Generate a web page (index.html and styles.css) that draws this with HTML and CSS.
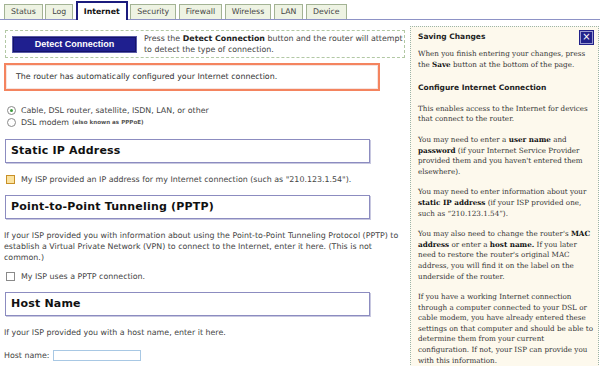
FILE: index.html
```html
<!DOCTYPE html>
<html lang="en">
<head>
    <meta charset="UTF-8">
    <title>Internet Settings</title>
    <link rel="stylesheet" href="styles.css">
</head>
<body>
    <div class="tabs">
        <div class="tab">Status</div>
        <div class="tab">Log</div>
        <div class="tab active">Internet</div>
        <div class="tab">Security</div>
        <div class="tab">Firewall</div>
        <div class="tab">Wireless</div>
        <div class="tab">LAN</div>
        <div class="tab">Device</div>
    </div>

    <div class="layout">
        <div class="main">
            <div class="detect">
                <button class="detect-btn">Detect Connection</button>
                <div class="detect-text">Press the <b>Detect Connection</b> button and the router will attempt<br>to detect the type of connection.</div>
            </div>

            <div class="alert">The router has automatically configured your Internet connection.</div>

            <div class="options">
                <div class="option"><span class="radio checked"></span>Cable, DSL router, satellite, ISDN, LAN, or other</div>
                <div class="option"><span class="radio"></span>DSL modem <span class="small">(also known as PPPoE)</span></div>
            </div>

            <h2 class="section">Static IP Address</h2>
            <div class="check-row"><span class="check hover"></span>My ISP provided an IP address for my Internet connection (such as "210.123.1.54").</div>

            <h2 class="section">Point-to-Point Tunneling (PPTP)</h2>
            <p class="para">If your ISP provided you with information about using the Point-to-Point Tunneling Protocol (PPTP) to establish a Virtual Private Network (VPN) to connect to the Internet, enter it here. (This is not common.)</p>
            <div class="check-row after-para"><span class="check"></span>My ISP uses a PPTP connection.</div>

            <h2 class="section">Host Name</h2>
            <p class="para">If your ISP provided you with a host name, enter it here.</p>
            <div class="field">Host name: <input class="text-input" type="text"></div>
        </div>

        <div class="help">
            <div class="help-head">
                <h3>Saving Changes</h3>
                <span class="close">&#215;</span>
            </div>
            <p class="first">When you finish entering your changes, press the <b>Save</b> button at the bottom of the page.</p>
            <h3>Configure Internet Connection</h3>
            <p>This enables access to the Internet for devices that connect to the router.</p>
            <p>You may need to enter a <b>user name</b> and <b>password</b> (if your Internet Service Provider provided them and you haven't entered them elsewhere).</p>
            <p>You may need to enter information about your <b>static IP address</b> (if your ISP provided one, such as &ldquo;210.123.1.54&rdquo;).</p>
            <p>You may also need to change the router's <b>MAC address</b> or enter a <b>host name.</b> If you later need to restore the router's original MAC address, you will find it on the label on the underside of the router.</p>
            <p>If you have a working Internet connection through a computer connected to your DSL or cable modem, you have already entered these settings on that computer and should be able to determine them from your current configuration. If not, your ISP can provide you with this information.</p>
            <p>If you have a DSL PPPoE connection to the Internet, you will need to enter your user name and password.</p>
        </div>
    </div>
</body>
</html>
```

FILE: styles.css
```css
body {
    margin: 0;
    font-family: "DejaVu Sans", Verdana, sans-serif;
    font-size: 7.9px;
    color: #444;
    background: #fff;
    overflow: hidden;
}
.tabs {
    display: flex;
    align-items: flex-end;
    height: 19px;
    padding-left: 4px;
    border-bottom: 1px solid #8d92c6;
}
.tab {
    height: 14px;
    line-height: 14px;
    padding: 0 6px;
    margin-right: 2.5px;
    border: 1px solid #a3b394;
    border-bottom: none;
    background: #eef3e3;
    font-size: 7.8px;
    color: #444;
}
.tab.active {
    height: 17px;
    line-height: 17px;
    padding: 0 6px;
    border: 2px solid #1b1b7d;
    border-bottom: none;
    background: #fff;
    font-weight: bold;
    color: #111;
    margin-bottom: -1px;
    position: relative;
}
.layout {
    display: flex;
    gap: 5px;
    padding-top: 6px;
}
.main {
    width: 401px;
    flex-shrink: 0;
    padding-left: 4px;
    padding-top: 4px;
}
.detect {
    display: flex;
    align-items: center;
    height: 26px;
    padding-left: 6px;
    border: 1px dashed #b2c8a4;
    margin-left: 1px;
}
.detect-btn {
    width: 125px;
    height: 17px;
    padding: 0;
    background: #1f1f8f;
    border: 1px solid #5a5aa8;
    box-shadow: inset 0 0 0 1px #14146a;
    color: #fff;
    font-family: "Liberation Sans", Arial, sans-serif;
    font-weight: bold;
    font-size: 9px;
}
.detect-text {
    margin-left: 7px;
    line-height: 11px;
    white-space: nowrap;
}
.detect-text b {
    color: #222;
}
.alert {
    width: 362px;
    height: 24px;
    line-height: 24px;
    margin-top: 5px;
    padding-left: 10px;
    border: 2px solid #f4845f;
    box-shadow: inset 0 0 0 1px #f6e4e0;
    color: #333;
}
.options {
    margin-top: 13px;
    padding-left: 3px;
}
.option {
    display: flex;
    align-items: center;
    height: 12px;
}
.radio {
    width: 7px;
    height: 7px;
    margin-right: 5px;
    border: 1px solid #8a8a8a;
    border-radius: 50%;
    background: #fff;
    position: relative;
}
.radio.checked::after {
    content: "";
    position: absolute;
    left: 2px;
    top: 2px;
    width: 3px;
    height: 3px;
    border-radius: 50%;
    background: #3c9a3c;
}
.small {
    font-size: 5.6px;
    font-weight: bold;
    margin-left: 3px;
    color: #555;
}
.section {
    width: 358px;
    height: 22px;
    line-height: 22px;
    margin: 11px 0 0 1px;
    padding-left: 5px;
    border: 1px solid #8c8cc0;
    box-shadow: 1px 1px 0 #c8c8e0;
    font-size: 11px;
    letter-spacing: 0.2px;
    color: #111;
}
.check-row {
    display: flex;
    align-items: center;
    margin-top: 12px;
    padding-left: 2px;
}
.check-row.after-para {
    margin-top: 9px;
}
.check {
    width: 7px;
    height: 7px;
    margin-right: 6px;
    border: 1px solid #8a8a8a;
    background: #fff;
}
.check.hover {
    border-color: #c89028;
    background: #fbe3a0;
}
.para {
    margin: 11px 0 0;
    line-height: 11px;
}
.field {
    display: flex;
    align-items: center;
    margin-top: 12px;
}
.text-input {
    width: 86px;
    height: 9px;
    margin-left: 3px;
    padding: 0;
    border: 1px solid #a8c8e4;
}
.help {
    width: 176px;
    height: 400px;
    padding: 3px 4px 0 7px;
    border: 1px dotted #9cb4a8;
    background: #fdf9ed;
    font-family: "DejaVu Serif", Georgia, serif;
    font-size: 7.2px;
    line-height: 10.6px;
    color: #333;
}
.help-head {
    display: flex;
    justify-content: space-between;
    align-items: flex-start;
}
.help h3 {
    margin: 0;
    font-family: "DejaVu Sans", Verdana, sans-serif;
    font-size: 7.5px;
    line-height: 10.6px;
    color: #222;
}
.help-head h3 {
    padding-top: 2px;
}
.close {
    width: 11px;
    height: 11px;
    line-height: 10px;
    margin-top: 1px;
    margin-right: 1px;
    text-align: center;
    background: #22228a;
    border: 1px solid #9a9ad0;
    box-shadow: 0 0 0 1px #22228a;
    color: #fff;
    font-family: "DejaVu Sans", sans-serif;
    font-size: 10px;
}
.help p {
    margin: 10px 0;
}
.help p.first {
    margin-top: 5px;
    margin-bottom: 13px;
}
.help b {
    color: #111;
}
```
